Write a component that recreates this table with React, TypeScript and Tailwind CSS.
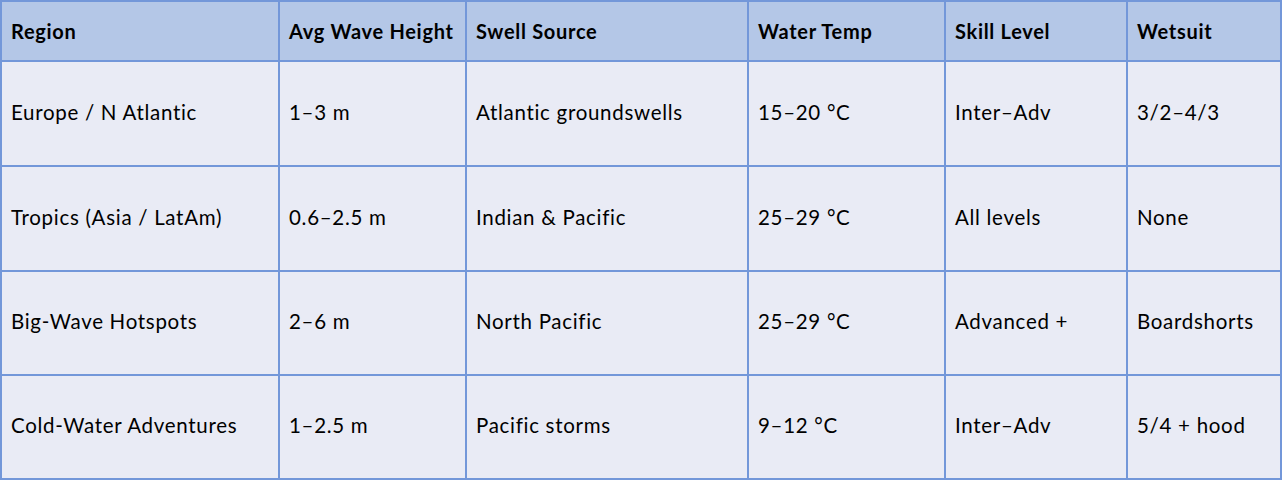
import React from "react";

const headers = ["Region", "Avg Wave Height", "Swell Source", "Water Temp", "Skill Level", "Wetsuit"];
const rows = [
  ["Europe / N Atlantic", "1–3 m", "Atlantic groundswells", "15–20 °C", "Inter–Adv", "3/2–4/3"],
  ["Tropics (Asia / LatAm)", "0.6–2.5 m", "Indian & Pacific", "25–29 °C", "All levels", "None"],
  ["Big-Wave Hotspots", "2–6 m", "North Pacific", "25–29 °C", "Advanced +", "Boardshorts"],
  ["Cold-Water Adventures", "1–2.5 m", "Pacific storms", "9–12 °C", "Inter–Adv", "5/4 + hood"],
];

export default function App() {
  return (
    <div className="w-[1283px] h-[481px] bg-white" style={{ fontFamily: "Lato, 'Open Sans', sans-serif" }}>
      <div className="w-[1282px] grid grid-cols-[276px_185px_280px_195px_180px_152px] grid-rows-[58px_103px_103px_102px_102px] gap-[2px] p-[2px] bg-[#7397d9]">
        {headers.map((h) => (
          <div key={h} className="bg-[#b4c7e7] flex items-center pl-[9px] text-[20px] tracking-[0.7px] font-bold text-black">
            {h}
          </div>
        ))}
        {rows.map((r, i) =>
          r.map((c, j) => (
            <div key={`${i}-${j}`} className="bg-[#e9ebf5] flex items-center pl-[9px] pb-[3px] text-[20.5px] tracking-[0.7px] text-black">
              {c}
            </div>
          ))
        )}
      </div>
    </div>
  );
}
